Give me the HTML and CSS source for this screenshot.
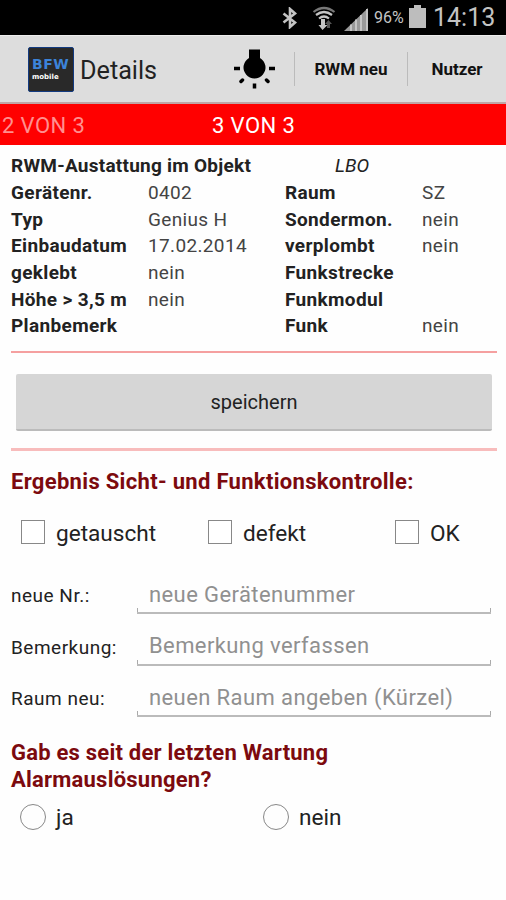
FILE: index.html
```html
<!DOCTYPE html>
<html lang="de">
<head>
  <meta charset="UTF-8">
  <meta name="viewport" content="width=device-width, initial-scale=1.0">
  <title>Details</title>
  <link rel="stylesheet" href="styles.css">
</head>
<body>
  <div class="statusbar">
    <svg class="bluetooth" width="16" height="22" viewBox="0 0 16 22">
      <path d="M1.500 6.500l11.500 9L8 20V2l5 4.500-11.500 9" fill="none" stroke="#c4c4c4" stroke-width="2.600"/>
    </svg>
    <svg class="wifi" width="24" height="24" viewBox="0 0 24 24">
      <g fill="none" stroke="#c4c4c4" stroke-width="2.200">
        <path d="M1.500 6q10.500-8 21 0" stroke="#777"/>
        <path d="M4 9q8-6 16 0M7 12.500q5-4 10 0"/>
      </g>
      <path d="M9 13h4v6h2.500L10.500 24l-4-5H9z" fill="#c4c4c4"/>
      <path d="M16.500 14l3.500 4h-2v4h-3v-4h-2z" fill="#555"/>
    </svg>
    <svg class="signal" width="25" height="24" viewBox="0 0 25 24">
      <path d="M0 24L24 1v23z" fill="#999"/>
      <path d="M7 17.500v6.500M12 12.500v11.500M17 8v16M23 2v22" stroke="#c4c4c4" stroke-width="2"/>
    </svg>
    <span class="percent">96%</span>
    <svg class="battery" width="17" height="23" viewBox="0 0 17 23">
      <path d="M0 3h5V0h7v3h5v20H0z" fill="#bdbdbd"/>
    </svg>
    <span class="clock">14:13</span>
  </div>

  <div class="actionbar">
    <div class="logo">
      <span class="logo-top">BFW</span>
      <span class="logo-bottom">mobile</span>
    </div>
    <h1>Details</h1>
    <svg class="lamp" width="44" height="42" viewBox="0 0 44 42">
      <path d="M16 1.500h11v8.500a11 11 0 1 1-11 0z"/>
      <path d="M1 20.500h6M36 20.500h6M21.500 35.500v5" stroke="#000" stroke-width="3.500"/>
      <path d="M8 33.500l1.500-1.500M35 33.500l-1.500-1.500" stroke="#000" stroke-width="3.500" stroke-linecap="round"/>
    </svg>
    <button class="action action-new">RWM neu</button>
    <button class="action action-user">Nutzer</button>
  </div>

  <div class="tabs">
    <span class="tab">2 VON 3</span>
    <span class="tab active">3 VON 3</span>
  </div>

  <div class="content">
    <div class="device-head">
      <b>RWM-Austattung im Objekt</b>
      <i>LBO</i>
    </div>
    <div class="device">
      <b>Gerätenr.</b><span>0402</span><b>Raum</b><span>SZ</span>
      <b>Typ</b><span>Genius H</span><b>Sondermon.</b><span>nein</span>
      <b>Einbaudatum</b><span>17.02.2014</span><b>verplombt</b><span>nein</span>
      <b>geklebt</b><span>nein</span><b>Funkstrecke</b><span></span>
      <b>Höhe &gt; 3,5 m</b><span>nein</span><b>Funkmodul</b><span></span>
      <b>Planbemerk</b><span></span><b>Funk</b><span>nein</span>
    </div>

    <div class="save">
      <button>speichern</button>
    </div>

    <h2>Ergebnis Sicht- und Funktionskontrolle:</h2>
    <div class="checks">
      <label><input type="checkbox"><span>getauscht</span></label>
      <label><input type="checkbox"><span>defekt</span></label>
      <label><input type="checkbox"><span>OK</span></label>
    </div>

    <div class="field">
      <label for="nr">neue Nr.:</label>
      <div class="edit"><input type="text" id="nr" placeholder="neue Gerätenummer"></div>
    </div>
    <div class="field">
      <label for="note">Bemerkung:</label>
      <div class="edit"><input type="text" id="note" placeholder="Bemerkung verfassen"></div>
    </div>
    <div class="field">
      <label for="room">Raum neu:</label>
      <div class="edit"><input type="text" id="room" placeholder="neuen Raum angeben (Kürzel)"></div>
    </div>

    <h2 class="alarm">Gab es seit der letzten Wartung Alarmauslösungen?</h2>
    <div class="radios">
      <label><input type="radio" name="alarm"><span>ja</span></label>
      <label><input type="radio" name="alarm"><span>nein</span></label>
    </div>
  </div>
</body>
</html>
```
FILE: styles.css
```css
* {
  box-sizing: border-box;
  font-family: Roboto, sans-serif;
}
body {
  margin: 0;
  background: #fefefe;
  color: #222;
}
button {
  border: none;
  padding: 0;
  cursor: pointer;
}
.statusbar {
  height: 35px;
  background: #000;
  color: #c4c4c4;
  display: flex;
  align-items: center;
  justify-content: flex-end;
  padding-right: 10px;
}
.bluetooth {
  margin-right: 14px;
}
.wifi {
  margin-right: 8px;
}
.signal {
  margin-top: 2px;
  margin-right: 5px;
}
.percent {
  width: 35px;
  font-size: 16px;
}
.battery {
  margin-right: 7px;
  margin-bottom: 2px;
}
.clock {
  width: 63px;
  font-size: 25px;
  white-space: nowrap;
}
.actionbar {
  height: 69px;
  background: #ddd;
  border-top: 1px solid #eee;
  border-bottom: 2px solid #c0a5a5;
  display: flex;
  align-items: center;
  padding-left: 28px;
}
.logo {
  width: 46px;
  height: 45px;
  background: #292929;
  border: 1px solid #123a80;
  border-radius: 2px;
  display: flex;
  flex-direction: column;
  padding: 9px 0 0 3px;
}
.logo-top {
  color: #3c83d8;
  font: bold 14px/14px "DejaVu Sans", sans-serif;
  letter-spacing: 0.5px;
}
.logo-bottom {
  color: #fff;
  font: bold 7px/12px "DejaVu Sans", sans-serif;
}
.actionbar h1 {
  width: 153px;
  margin: 2px 0 0 6px;
  font-size: 25.2px;
  font-weight: 400;
}
.lamp {
  margin-right: 17px;
}
.action {
  height: 34px;
  border-left: 1px solid #bbb;
  background: none;
  color: #111;
  font-size: 17px;
  font-weight: 700;
}
.action-new {
  width: 113px;
}
.action-user {
  width: 99px;
}
.tabs {
  height: 41px;
  background: #f00;
  color: #fff;
  display: flex;
  align-items: center;
  padding: 1px 0 0 2px;
  font-size: 22px;
  letter-spacing: 0.4px;
}
.tab {
  width: 210px;
  color: #ff8f8f;
}
.tab.active {
  color: #fff;
}
.content {
  padding: 7px 9px 0 11px;
}
.device-head {
  display: flex;
  font-size: 19px;
  line-height: 27px;
  letter-spacing: 0.25px;
}
.device-head b {
  width: 324px;
}
.device-head i {
  letter-spacing: 0;
}
.device {
  display: grid;
  grid-template-columns: 137px 137px 137px 1fr;
  grid-auto-rows: 26.7px;
  font-size: 19px;
  line-height: 27px;
  letter-spacing: 0.35px;
}
.device span {
  color: #444;
}
.save {
  height: 100px;
  margin-top: 12px;
  border-top: 2px solid #f5a0a0;
  border-bottom: 3px solid #f8bcbc;
  padding: 21px 5px 0;
}
.save button {
  width: 100%;
  height: 57px;
  background: #d6d6d6;
  border-bottom: 2px solid #bbb;
  border-radius: 2px;
  color: #222;
  font-size: 20px;
  padding-top: 1px;
}
h2 {
  margin: 0;
  color: #7c0a0e;
  font-size: 22px;
  line-height: 27px;
  letter-spacing: 0.31px;
}
.save + h2 {
  margin-top: 17px;
}
.checks {
  height: 48px;
  margin-top: 13px;
  display: grid;
  grid-template-columns: 187px 187px 1fr;
  align-items: center;
  padding-left: 10px;
  font-size: 22.6px;
}
.checks label, .radios label {
  display: flex;
  align-items: center;
}
.checks span {
  padding-top: 2px;
}
.checks input {
  appearance: none;
  width: 24px;
  height: 24px;
  margin: 0 11px 0 0;
  background: #fff;
  border: 1px solid #888;
}
.field {
  height: 51.5px;
  display: flex;
}
.checks + .field {
  margin-top: 14px;
}
.field label {
  width: 126px;
  padding-top: 14px;
  font-size: 19px;
  line-height: 24px;
  letter-spacing: 0.5px;
}
/* underline with short upturned ends */
.edit {
  width: 354px;
  height: 44px;
  background:
    linear-gradient(#aaa, #aaa) left bottom / 1px 4px no-repeat,
    linear-gradient(#aaa, #aaa) right bottom / 1px 4px no-repeat;
  border-bottom: 2px solid #bbb;
}
.edit input {
  width: 100%;
  height: 100%;
  padding: 6px 0 0 12px;
  border: none;
  outline: none;
  background: none;
  font-size: 22px;
  letter-spacing: 0.4px;
}
.edit input::placeholder {
  color: #909090;
}
.alarm {
  width: 400px;
  margin-top: 14px;
  letter-spacing: 0.22px;
}
.radios {
  height: 46px;
  margin-top: 1px;
  display: grid;
  grid-template-columns: 243px 1fr;
  padding-left: 9px;
  font-size: 22.6px;
}
.radios span {
  padding-top: 2px;
}
.radios input {
  appearance: none;
  width: 26px;
  height: 26px;
  margin: 0 10px 0 0;
  border: 1px solid #888;
  border-radius: 50%;
}
```
